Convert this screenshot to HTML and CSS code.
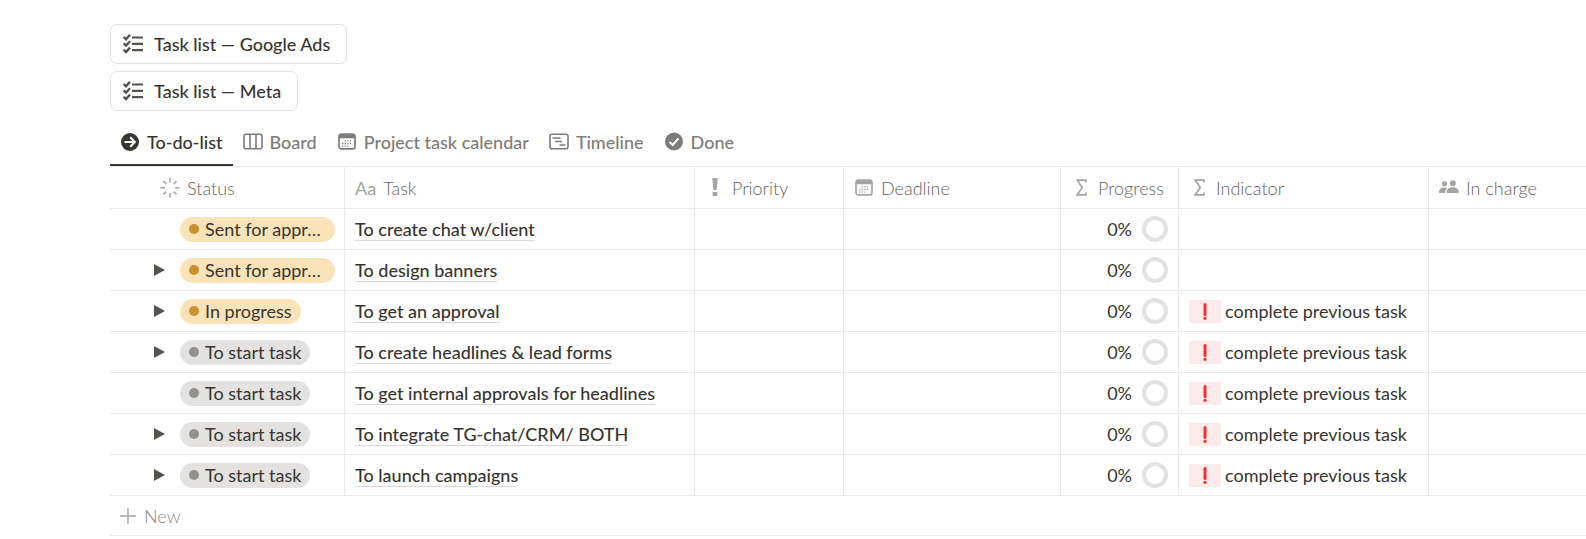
FILE: index.html
```html
<!DOCTYPE html>
<html lang="en">
<head>
<meta charset="utf-8">
<title>Task list</title>
<link rel="stylesheet" href="styles.css">
</head>
<body>
<svg class="sprite" aria-hidden="true">
  <symbol id="checklist" viewBox="0 0 20 20">
    <path d="M.6 3 3 5.200 7 .8M.6 9.400 3 11.600 7 7.200M.6 15.800 3 18 7 13.600" fill="none" stroke="currentColor" stroke-width="2.400"/>
    <path d="M9 3.500h11M9 9.800h11M9 16.100h11" fill="none" stroke="currentColor" stroke-width="2.200"/>
  </symbol>
  <symbol id="calendar" viewBox="0 0 20 20">
    <rect x="2" y="2.300" width="16" height="14.500" rx="2.400" fill="none" stroke="currentColor" stroke-width="1.700"/>
    <path d="M2 6.200V3.500A2 2 0 0 1 4 1.500h12a2 2 0 0 1 2 2v2.700z" fill="currentColor"/>
    <path d="M7.700 8.900h7.500M5 11.500h10.200M5 14.100h7.500" fill="none" stroke="currentColor" stroke-width="1.300" stroke-dasharray="1.300 1.300"/>
  </symbol>
  <symbol id="sigma" viewBox="0 0 20 20">
    <path d="M15 4.500V2.200H6.200l5 7.300-5 7.300H15v-2.300" fill="none" stroke="currentColor" stroke-width="1.700"/>
  </symbol>
</svg>
<main class="page">
  <div class="lists">
    <button class="list-button" type="button"><svg class="icon-20"><use href="#checklist"/></svg>Task list — Google Ads</button>
    <button class="list-button" type="button"><svg class="icon-20"><use href="#checklist"/></svg>Task list — Meta</button>
  </div>

  <div class="tabs" role="tablist">
    <button class="tab tab-active" role="tab" aria-selected="true" type="button">
      <svg class="icon-20" viewBox="0 0 20 20"><circle cx="10" cy="10" r="9" fill="currentColor"/><path d="M4.500 10h10M10.200 5.300l4.700 4.700-4.700 4.700" fill="none" stroke="#fff" stroke-width="2"/></svg>To-do-list</button>
    <button class="tab" role="tab" aria-selected="false" type="button">
      <svg class="icon-20" viewBox="0 0 20 20"><rect x="1" y="2.300" width="18" height="14.400" rx="2" fill="none" stroke="currentColor" stroke-width="1.600"/><path d="M7 2.500v14M13 2.500v14" stroke="currentColor" stroke-width="1.600"/></svg>Board</button>
    <button class="tab" role="tab" aria-selected="false" type="button">
      <svg class="icon-20"><use href="#calendar"/></svg>Project task calendar</button>
    <button class="tab" role="tab" aria-selected="false" type="button">
      <svg class="icon-20" viewBox="0 0 20 20"><rect x="1" y="2.300" width="18" height="14.400" rx="2" fill="none" stroke="currentColor" stroke-width="1.600"/><path d="M3.500 6h8M6 9.500h7M10.500 13h6" stroke="currentColor" stroke-width="1.400"/></svg>Timeline</button>
    <button class="tab" role="tab" aria-selected="false" type="button">
      <svg class="icon-20" viewBox="0 0 20 20"><circle cx="10" cy="9.500" r="9" fill="currentColor"/><path d="M5.500 9.900l3.200 3.100 5.800-6.700" fill="none" stroke="#fff" stroke-width="2"/></svg>Done</button>
  </div>

  <table class="tasks">
    <colgroup><col class="col-status"><col class="col-task"><col class="col-priority"><col class="col-deadline"><col class="col-progress"><col class="col-indicator"><col></colgroup>
    <thead>
      <tr>
        <th scope="col"><div class="head head-status"><svg class="icon-20" viewBox="0 0 20 20"><path d="M10 0v4.500M10 15v4.500M.5 9.800H5M15 9.800h4.500M3.500 3.300l2.600 2.600M13.900 13.700l2.600 2.600M3.500 16.300l2.600-2.600M13.900 5.900l2.600-2.600" stroke="currentColor" stroke-width="1.600"/></svg><span>Status</span></div></th>
        <th scope="col"><div class="head"><span class="aa" aria-hidden="true">Aa</span><span>Task</span></div></th>
        <th scope="col"><div class="head"><svg class="icon-20" viewBox="0 0 20 20"><path d="M7.300 0h5.400l-1 12H8.300zM7.700 14h4.600v4H7.700z" fill="currentColor"/></svg><span>Priority</span></div></th>
        <th scope="col"><div class="head"><svg class="icon-20"><use href="#calendar"/></svg><span>Deadline</span></div></th>
        <th scope="col"><div class="head"><svg class="icon-20"><use href="#sigma"/></svg><span>Progress</span></div></th>
        <th scope="col"><div class="head"><svg class="icon-20"><use href="#sigma"/></svg><span>Indicator</span></div></th>
        <th scope="col"><div class="head"><svg class="icon-20" viewBox="0 0 20 20"><g fill="currentColor"><circle cx="5.500" cy="5.800" r="2.600"/><circle cx="13.800" cy="5.200" r="3"/><path d="M0 14.500c0-3.400 2.200-5 5.200-5 1.300 0 2.300.2 3.200.8-1.600 1.200-2.200 2.600-2.300 4.700H.6zM7.600 14.500c0-3.600 3-5.300 6.200-5.300s6.200 1.700 6.200 5.300l-.5.500H8.100z"/></g></svg><span>In charge</span></div></th>
      </tr>
    </thead>
    <tbody>
      <tr>
        <td><div class="status"><span class="toggle"></span><span class="pill pill-wide pill-yellow" title="Sent for approval">Sent for appr…</span></div></td>
        <td><a class="task" href="#">To create chat w/client</a></td><td></td><td></td>
        <td><div class="progress">0%<span class="ring"></span></div></td><td></td><td></td>
      </tr>
      <tr>
        <td><div class="status"><button class="toggle" type="button" aria-label="Expand"><svg class="arrow" viewBox="0 0 11 12"><path d="M0 0l11 6-11 6z" fill="currentColor"/></svg></button><span class="pill pill-wide pill-yellow" title="Sent for approval">Sent for appr…</span></div></td>
        <td><a class="task" href="#">To design banners</a></td><td></td><td></td>
        <td><div class="progress">0%<span class="ring"></span></div></td><td></td><td></td>
      </tr>
      <tr>
        <td><div class="status"><button class="toggle" type="button" aria-label="Expand"><svg class="arrow" viewBox="0 0 11 12"><path d="M0 0l11 6-11 6z" fill="currentColor"/></svg></button><span class="pill pill-yellow">In progress</span></div></td>
        <td><a class="task" href="#">To get an approval</a></td><td></td><td></td>
        <td><div class="progress">0%<span class="ring"></span></div></td>
        <td><div class="indicator"><span class="alert"><svg class="mark" viewBox="0 0 4 17"><path d="M2 1.500v10" stroke="currentColor" stroke-width="3" stroke-linecap="round"/><circle cx="2" cy="15.300" r="1.600" fill="currentColor"/></svg></span>complete previous task</div></td><td></td>
      </tr>
      <tr>
        <td><div class="status"><button class="toggle" type="button" aria-label="Expand"><svg class="arrow" viewBox="0 0 11 12"><path d="M0 0l11 6-11 6z" fill="currentColor"/></svg></button><span class="pill pill-gray">To start task</span></div></td>
        <td><a class="task" href="#">To create headlines &amp; lead forms</a></td><td></td><td></td>
        <td><div class="progress">0%<span class="ring"></span></div></td>
        <td><div class="indicator"><span class="alert"><svg class="mark" viewBox="0 0 4 17"><path d="M2 1.500v10" stroke="currentColor" stroke-width="3" stroke-linecap="round"/><circle cx="2" cy="15.300" r="1.600" fill="currentColor"/></svg></span>complete previous task</div></td><td></td>
      </tr>
      <tr>
        <td><div class="status"><span class="toggle"></span><span class="pill pill-gray">To start task</span></div></td>
        <td><a class="task" href="#">To get internal approvals for headlines</a></td><td></td><td></td>
        <td><div class="progress">0%<span class="ring"></span></div></td>
        <td><div class="indicator"><span class="alert"><svg class="mark" viewBox="0 0 4 17"><path d="M2 1.500v10" stroke="currentColor" stroke-width="3" stroke-linecap="round"/><circle cx="2" cy="15.300" r="1.600" fill="currentColor"/></svg></span>complete previous task</div></td><td></td>
      </tr>
      <tr>
        <td><div class="status"><button class="toggle" type="button" aria-label="Expand"><svg class="arrow" viewBox="0 0 11 12"><path d="M0 0l11 6-11 6z" fill="currentColor"/></svg></button><span class="pill pill-gray">To start task</span></div></td>
        <td><a class="task" href="#">To integrate TG-chat/CRM/ BOTH</a></td><td></td><td></td>
        <td><div class="progress">0%<span class="ring"></span></div></td>
        <td><div class="indicator"><span class="alert"><svg class="mark" viewBox="0 0 4 17"><path d="M2 1.500v10" stroke="currentColor" stroke-width="3" stroke-linecap="round"/><circle cx="2" cy="15.300" r="1.600" fill="currentColor"/></svg></span>complete previous task</div></td><td></td>
      </tr>
      <tr>
        <td><div class="status"><button class="toggle" type="button" aria-label="Expand"><svg class="arrow" viewBox="0 0 11 12"><path d="M0 0l11 6-11 6z" fill="currentColor"/></svg></button><span class="pill pill-gray">To start task</span></div></td>
        <td><a class="task" href="#">To launch campaigns</a></td><td></td><td></td>
        <td><div class="progress">0%<span class="ring"></span></div></td>
        <td><div class="indicator"><span class="alert"><svg class="mark" viewBox="0 0 4 17"><path d="M2 1.500v10" stroke="currentColor" stroke-width="3" stroke-linecap="round"/><circle cx="2" cy="15.300" r="1.600" fill="currentColor"/></svg></span>complete previous task</div></td><td></td>
      </tr>
    </tbody>
  </table>
  <button class="new-row" type="button"><svg class="plus" viewBox="0 0 16 16"><path d="M8 0v16M0 8h16" stroke="currentColor" stroke-width="1.400"/></svg>New</button>
</main>
</body>
</html>
```
FILE: styles.css
```css
* { box-sizing: border-box; }

body {
  margin: 0;
  background: #fff;
  color: #37352f;
  font-family: Lato, "Open Sans", sans-serif;
  font-size: 18px;
  line-height: 24px;
}

button {
  margin: 0;
  border: 0;
  padding: 0;
  background: none;
  color: inherit;
  font: inherit;
  cursor: pointer;
}

svg { display: block; flex: none; }
.sprite { position: absolute; width: 0; height: 0; }
.icon-20 { width: 20px; height: 20px; }

.page { padding: 24px 0 0 110px; }

.lists {
  display: flex;
  flex-direction: column;
  align-items: flex-start;
  gap: 7px;
}
.list-button {
  display: flex;
  align-items: center;
  gap: 11px;
  height: 40px;
  padding: 0 16px 0 12px;
  border: 1px solid #dfdfde;
  border-radius: 7px;
  font-weight: 500;
}
.list-button svg { color: #55534e; }

.tabs {
  display: flex;
  height: 55px;
  padding-top: 9px;
}
.tab {
  display: flex;
  align-items: center;
  gap: 7px;
  padding: 0 10px;
  border-bottom: 2px solid transparent;
  color: #7d7c78;
  font-weight: 500;
}
.tab-active { border-color: #37352f; color: #37352f; }

.tasks {
  width: 100%;
  table-layout: fixed;
  border-collapse: separate;
  border-spacing: 0;
  border-top: 1px solid #e9e9e7;
}
.col-status { width: 235px; }
.col-task { width: 350px; }
.col-priority { width: 149px; }
.col-deadline { width: 217px; }
.col-progress { width: 118px; }
.col-indicator { width: 250px; }

th, td {
  height: 41px;
  padding: 0 9px 0 10px;
  border-right: 1px solid #e9e9e7;
  border-bottom: 1px solid #e9e9e7;
  white-space: nowrap;
  text-align: left;
}
th { height: 42px; color: #65645f; font-weight: 300; }
th:last-child, td:last-child { border-right: 0; }

.head { display: flex; align-items: center; gap: 7px; }
.head svg, .aa { color: #a5a4a0; }
.aa { font-weight: 400; }
.head-status { padding-left: 40px; }

.status { display: flex; align-items: center; color: #55534e; }
.toggle {
  display: flex;
  flex: none;
  justify-content: flex-end;
  width: 45px;
  margin-right: 15px;
}
.arrow { width: 11px; height: 12px; }

.pill {
  display: flex;
  align-items: center;
  gap: 6px;
  height: 25px;
  padding: 0 9px;
  border-radius: 13px;
  color: #37352f;
}
.pill-wide { flex: 1; }
.pill::before {
  content: "";
  flex: none;
  width: 10px;
  height: 10px;
  border-radius: 50%;
}
.pill-yellow { background: #fae3b9; }
.pill-yellow::before { background: #cb912f; }
.pill-gray { background: #e3e2e0; }
.pill-gray::before { background: #91918e; }

.task {
  display: inline-block;
  height: 22px;
  border-bottom: 1px solid #d9d8d6;
  color: inherit;
  font-weight: 500;
  line-height: 21px;
  text-decoration: none;
}

.progress {
  display: flex;
  align-items: center;
  justify-content: flex-end;
  gap: 10px;
  padding-right: 1px;
}
.ring {
  width: 26px;
  height: 26px;
  border: 4px solid #e3e2e0;
  border-radius: 50%;
}

.indicator { display: flex; align-items: center; gap: 4px; }
.alert {
  display: flex;
  align-items: center;
  justify-content: center;
  width: 32px;
  height: 23px;
  background: #fdebec;
  color: #fc2d2f;
}
.mark { width: 4px; height: 17px; }

.new-row {
  display: flex;
  align-items: center;
  gap: 8px;
  width: 100%;
  height: 40px;
  padding-left: 10px;
  border-bottom: 1px solid #e9e9e7;
  color: #85847f;
  font-weight: 300;
}
.plus { width: 16px; height: 16px; color: #a5a4a0; }
```
